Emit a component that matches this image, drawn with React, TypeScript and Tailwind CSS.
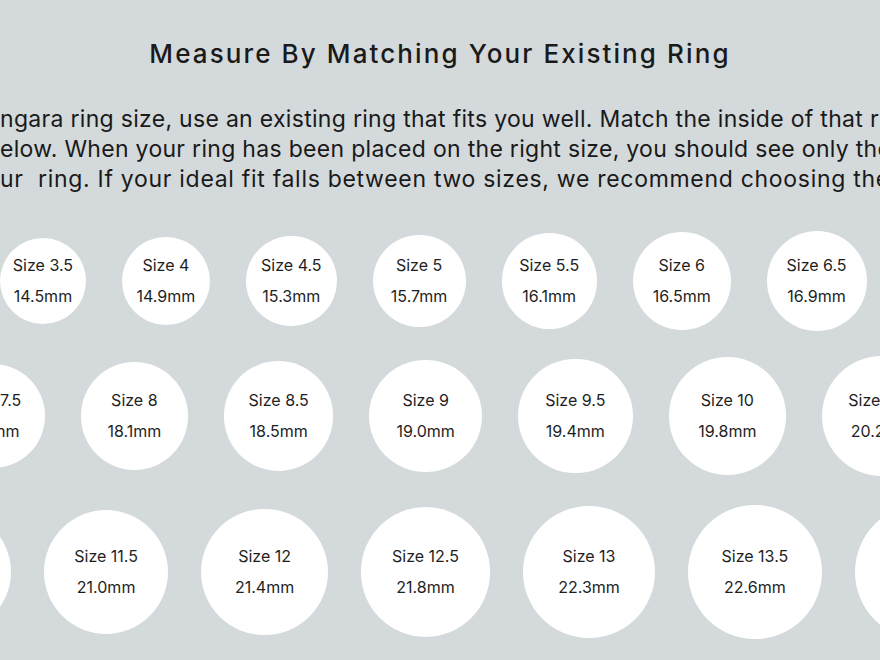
const rows = [
  {
    shift: 'ml-0', gap: 'gap-[36px]', h: 'h-[100px]', top: 'mt-0',
    items: [['3.5', '14.5'], ['4', '14.9'], ['4.5', '15.3'], ['5', '15.7'], ['5.5', '16.1'], ['6', '16.5'], ['6.5', '16.9']],
  },
  {
    shift: '-ml-[60px]', gap: 'gap-[36px]', h: 'h-[120px]', top: 'mt-[25px]',
    items: [['7.5', '17.7'], ['8', '18.1'], ['8.5', '18.5'], ['9', '19.0'], ['9.5', '19.4'], ['10', '19.8'], ['10.5', '20.2']],
  },
  {
    shift: '-ml-[111px]', gap: 'gap-[33px]', h: 'h-[136px]', top: 'mt-[28px]',
    items: [['11', '20.6'], ['11.5', '21.0'], ['12', '21.4'], ['12.5', '21.8'], ['13', '22.3'], ['13.5', '22.6'], ['14', '23.0']],
  },
]

// circles are drawn to scale: about 5.92px per mm
const PX_PER_MM = 5.92

function SizeCircle({ size, mm }: { size: string; mm: string }) {
  const d = parseFloat(mm) * PX_PER_MM
  return (
    <div
      className="shrink-0 rounded-full bg-white flex flex-col items-center justify-center text-[16px] leading-[31px] text-[#1e1e1e]"
      style={{ width: d, height: d }}
    >
      <span className="whitespace-nowrap">Size {size}</span>
      <span className="whitespace-nowrap">{mm}mm</span>
    </div>
  )
}

export default function App() {
  return (
    <div className="w-[880px] h-[660px] overflow-hidden bg-[#d4d9dc] font-['Inter','Noto_Sans',sans-serif] text-[#1a1a1a]">
      {/* Heading */}
      <h1 className="pt-[39px] text-center text-[26px] leading-[30px] font-medium tracking-[2.1px] whitespace-nowrap">
        Measure By Matching Your Existing Ring
      </h1>

      {/* Intro copy, wider than the frame */}
      <div className="mt-[35px] text-[23px] leading-[30px] tracking-[0.3px] whitespace-pre">
        <p>ngara ring size, use an existing ring that fits you well. Match the inside of that ring</p>
        <p>elow. When your ring has been placed on the right size, you should see only the</p>
        <p className="tracking-[0.7px]">ur  ring. If your ideal fit falls between two sizes, we recommend choosing the lower size.</p>
      </div>

      {/* Size circles */}
      <div className="mt-[37px] flex flex-col">
        {rows.map((row, i) => (
          <div key={i} className={`flex items-center ${row.h} ${row.gap} ${row.shift} ${row.top}`}>
            {row.items.map(([size, mm]) => (
              <SizeCircle key={size} size={size} mm={mm} />
            ))}
          </div>
        ))}
      </div>
    </div>
  )
}
